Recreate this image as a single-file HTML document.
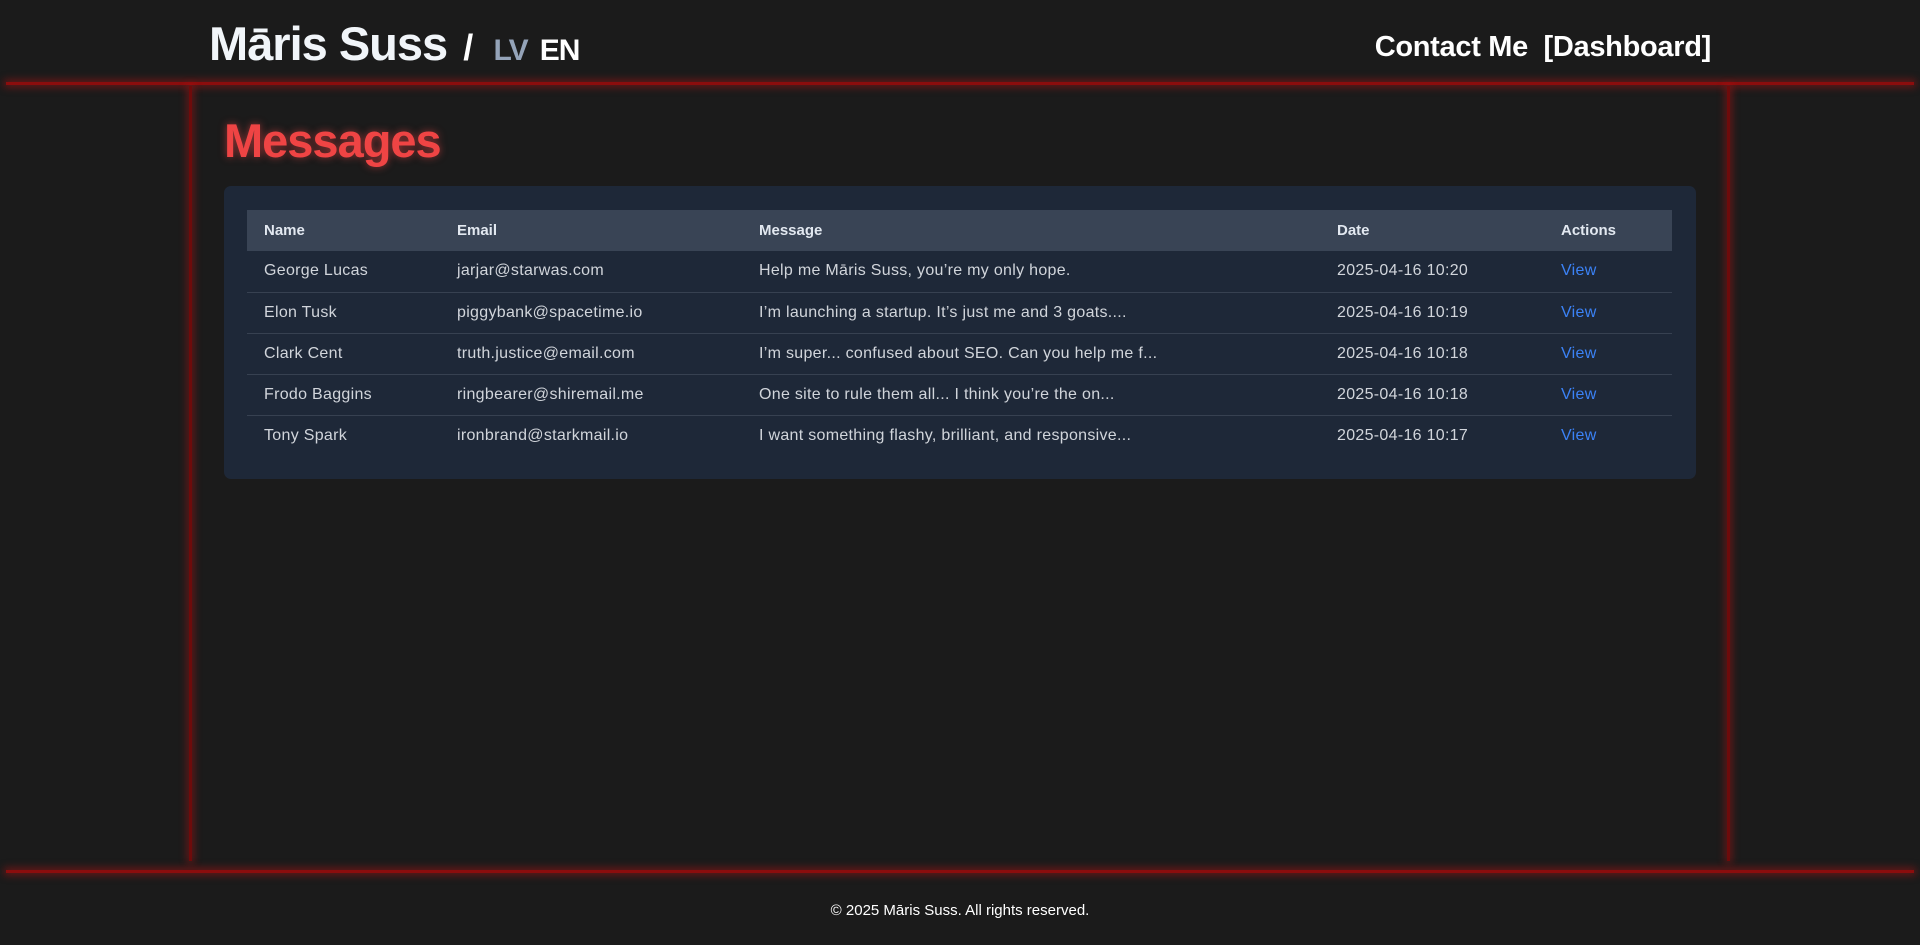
<!DOCTYPE html>
<html><head><meta charset="utf-8"><style>
*{margin:0;padding:0;box-sizing:border-box}
body{width:1920px;height:945px;background:#1b1b1b;font-family:"Liberation Sans",sans-serif;color:#e5e7eb;position:relative;overflow:hidden}
.hline{position:absolute;left:6px;width:1908px;height:3px;background:#8b0d0d;box-shadow:0 0 8px 2px rgba(200,20,20,.5)}
.vline{position:absolute;top:86px;height:775px;width:3px;background:#6e0b0b;box-shadow:0 0 8px 2px rgba(200,20,20,.45)}
.title{position:absolute;left:209px;top:16px;font-size:47px;font-weight:bold;color:#f1f5f9;letter-spacing:-1px;white-space:nowrap}
.title .sl{font-size:36px;margin-left:16px;margin-right:6px;color:#fff}
.title .lv{font-size:30px;color:#94a3b8;margin-left:8px}
.title .en{font-size:30px;color:#fff}
.nav{position:absolute;right:209px;top:31px;font-size:29px;font-weight:bold;color:#fff;white-space:nowrap;letter-spacing:-0.3px}
h1{position:absolute;left:224px;top:113px;font-size:47px;color:#ef4444;text-shadow:0 0 8px rgba(239,68,68,.6);letter-spacing:-1px}
.card{position:absolute;left:224px;top:186px;width:1472px;height:293px;background:#1e2838;border-radius:7px}
table{position:absolute;left:23px;top:24px;width:1425px;border-collapse:collapse;font-size:16px;letter-spacing:.3px}
th{background:#394455;color:#e2e8f0;text-align:left;height:41px;font-size:15px;font-weight:bold;padding-left:17px;letter-spacing:0}
td{height:41px;padding-left:17px;color:#d1d5db;border-bottom:1px solid #374151}
tr:last-child td{border-bottom:none}
td a{color:#3b82f6;text-decoration:none}
.foot{position:absolute;top:902px;width:100%;text-align:center;font-size:15px;color:#fff}
</style></head><body>
<div class="title">Māris Suss<span class="sl">/</span><span class="lv"> LV</span> <span class="en">EN</span></div>
<div class="nav">Contact Me&nbsp; [Dashboard]</div>
<div class="hline" style="top:82px"></div>
<div class="vline" style="left:189px"></div>
<div class="vline" style="left:1727px"></div>
<h1>Messages</h1>
<div class="card"><table>
<colgroup><col style="width:193px"><col style="width:302px"><col style="width:578px"><col style="width:224px"><col></colgroup>
<tr><th>Name</th><th>Email</th><th>Message</th><th>Date</th><th>Actions</th></tr>
<tr><td>George Lucas</td><td>jarjar@starwas.com</td><td>Help me Māris Suss, you’re my only hope.</td><td>2025-04-16 10:20</td><td><a>View</a></td></tr>
<tr><td>Elon Tusk</td><td>piggybank@spacetime.io</td><td>I’m launching a startup. It’s just me and 3 goats....</td><td>2025-04-16 10:19</td><td><a>View</a></td></tr>
<tr><td>Clark Cent</td><td>truth.justice@email.com</td><td>I’m super... confused about SEO. Can you help me f...</td><td>2025-04-16 10:18</td><td><a>View</a></td></tr>
<tr><td>Frodo Baggins</td><td>ringbearer@shiremail.me</td><td>One site to rule them all... I think you’re the on...</td><td>2025-04-16 10:18</td><td><a>View</a></td></tr>
<tr><td>Tony Spark</td><td>ironbrand@starkmail.io</td><td>I want something flashy, brilliant, and responsive...</td><td>2025-04-16 10:17</td><td><a>View</a></td></tr>
</table></div>
<div class="hline" style="top:870px"></div>
<div class="foot">© 2025 Māris Suss. All rights reserved.</div>
</body></html>
